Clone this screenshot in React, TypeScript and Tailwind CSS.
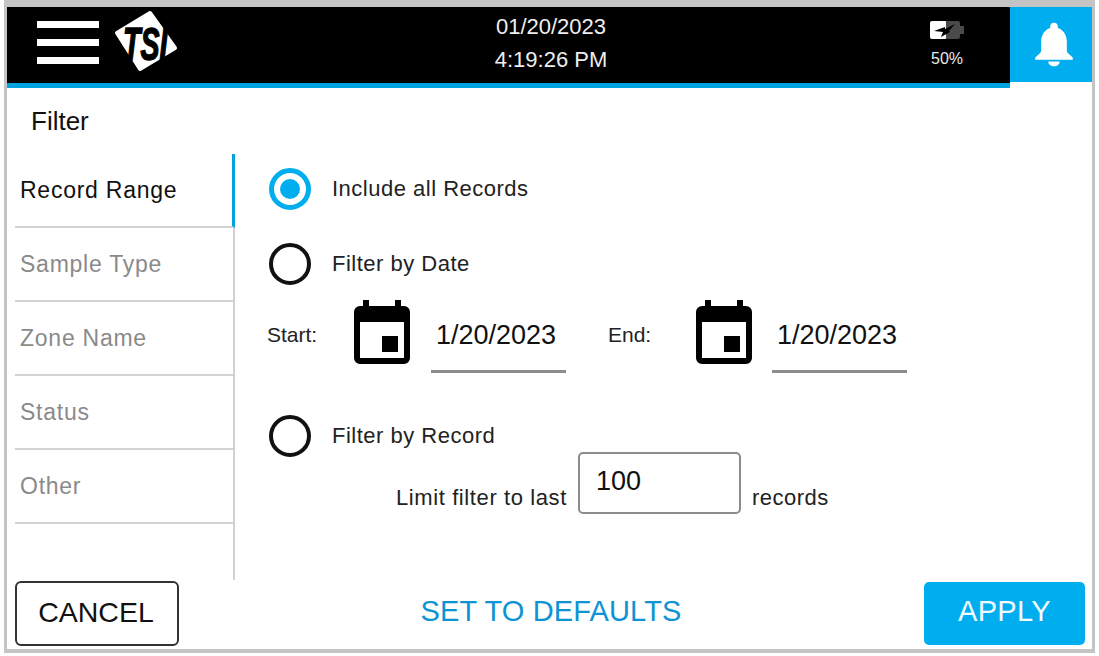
const font = "font-['Liberation_Sans',Arial,sans-serif]"

function Radio({ checked }: { checked?: boolean }) {
  return (
    <div
      className={
        checked
          ? "ml-[1px] flex h-[42px] w-[42px] shrink-0 items-center justify-center rounded-full border-[5px] border-[#00aeef]"
          : "ml-[1px] flex h-[42px] w-[42px] shrink-0 items-center justify-center rounded-full border-[4px] border-[#111111]"
      }
    >
      {checked && <div className="h-[20px] w-[20px] rounded-full bg-[#00aeef]" />}
    </div>
  )
}

function CalendarIcon() {
  return (
    <svg width="56" height="64" viewBox="0 0 56 64" className="shrink-0">
      <path
        fill="#000"
        fillRule="evenodd"
        d="M9 0h6v6h26V0h6v6h3a6 6 0 0 1 6 6v46a6 6 0 0 1-6 6H6a6 6 0 0 1-6-6V12a6 6 0 0 1 6-6h3V0zM6 22v36h44V22H6z"
      />
      <rect x="28" y="36" width="16" height="16" fill="#000" />
    </svg>
  )
}

function DateField({ value }: { value: string }) {
  return (
    <div className="flex h-[73px] w-[135px] items-center border-b-[3px] border-[#8c8c8c] pl-[5px] pt-[1px] text-[27px] tracking-normal text-[#111]">
      {value}
    </div>
  )
}

const tabs = ["Record Range", "Sample Type", "Zone Name", "Status", "Other"]

export default function App() {
  return (
    <div className={`${font} h-[656px] w-[1099px] overflow-hidden bg-white`}>
      <div className="ml-[4px] flex h-[653px] w-[1091px] flex-col border-x-[3px] border-t-[7px] border-b-[4px] border-[#c4c4c4] bg-white">
        {/* Header */}
        <header className="flex h-[81px] shrink-0">
          <div className="flex flex-1 items-start border-b-[5px] border-[#00a3dd] bg-black">
            <div className="ml-[30px] mt-[14px] flex w-[62px] flex-col gap-[11px]">
              <div className="h-[7px] bg-white" />
              <div className="h-[7px] bg-white" />
              <div className="h-[7px] bg-white" />
            </div>
            <svg width="66" height="64" viewBox="0 0 66 64" className="ml-[14px] mt-[3px] shrink-0">
              <path
                fill="#fff"
                stroke="#fff"
                strokeWidth="4"
                strokeLinejoin="round"
                d="M37 3 L62 38 L27 59 L4 23 Z"
              />
              <g transform="translate(10 50) scale(0.62 1)">
                <text
                  fontFamily="Liberation Sans"
                  fontWeight="700"
                  fontStyle="italic"
                  fontSize="46"
                  fill="#000"
                  stroke="#000"
                  strokeWidth="1.5"
                >
                  TSI
                </text>
              </g>
            </svg>
            <div className="ml-[297px] mt-[3px] flex w-[150px] flex-col items-center text-[22px] leading-[33px] text-[#eeeeee]">
              <span>01/20/2023</span>
              <span>4:19:26 PM</span>
            </div>
            <div className="ml-[304px] mt-[14px] flex w-[34px] flex-col items-center text-[#e8e8e8]">
              <svg width="36" height="18" viewBox="0 0 36 18" className="shrink-0">
                <rect x="1" y="0" width="17" height="18" rx="2" fill="#fff" />
                <path d="M17 0h12a2 2 0 0 1 2 2v3h4v8h-4v3a2 2 0 0 1-2 2H17z" fill="#4a4a4a" />
                <path d="M5 10 L16 6 L16 8 L26 3 L20 10 L21 11 L12 16 L14 11 Z" fill="#000" />
              </svg>
              <span className="mt-[11px] text-[16px] leading-[18px]">50%</span>
            </div>
          </div>
          <div className="flex h-[75px] w-[82px] items-center justify-center bg-[#00aeef] pl-[6px]">
            <svg width="38" height="45" viewBox="0 0 40 46">
              <path
                fill="#fff"
                d="M20 0a4 4 0 0 1 4 4v1.5C30 7.5 33.5 13 33.5 20v9c0 2.5 2 4 4.500 6 1.500 1.200 2 2 2 3 0 .8-.6 1-1.500 1H1.500C.6 39 0 38.800 0 38c0-1 .5-1.800 2-3 2.500-2 4.500-3.500 4.500-6v-9C6.500 13 10 7.500 16 5.500V4a4 4 0 0 1 4-4z"
              />
              <path fill="#fff" d="M14 41h12c0 3-2.500 5-6 5s-6-2-6-5z" />
            </svg>
          </div>
        </header>

        <div className="ml-[24px] mt-[15px] text-[26px] leading-[36px] text-[#111]">Filter</div>

        {/* Main */}
        <div className="mt-[15px] flex min-h-0 flex-1">
          <nav className="ml-[8px] h-[426px] w-[220px] shrink-0 border-r-[2px] border-[#d2d2d2]">
            {tabs.map((tab, i) => (
              <div
                key={tab}
                className={
                  i === 0
                    ? "-mr-[2px] flex h-[74px] items-center border-r-[3px] border-b-[2px] border-r-[#00a3dd] border-b-[#d2d2d2] pl-[5px] pt-[1px] text-[23px] tracking-[0.75px] text-[#111]"
                    : "flex h-[74px] items-center border-b-[2px] border-[#d2d2d2] pl-[5px] pt-[1px] text-[23px] tracking-[0.75px] text-[#8a8a8a]"
                }
              >
                {tab}
              </div>
            ))}
          </nav>

          <div className="ml-[33px] flex flex-col text-[22px] tracking-[0.5px] text-[#222]">
            <div className="mt-[13px] flex h-[43px] items-center gap-[21px]">
              <Radio checked />
              <span>Include all Records</span>
            </div>
            <div className="mt-[32px] flex h-[43px] items-center gap-[21px]">
              <Radio />
              <span>Filter by Date</span>
            </div>
            <div className="-ml-[1px] mt-[15px] flex items-start tracking-normal">
              <span className="mt-[19px] w-[87px] text-[21px]">Start:</span>
              <CalendarIcon />
              <div className="ml-[21px]">
                <DateField value="1/20/2023" />
              </div>
              <span className="ml-[42px] mt-[19px] w-[88px] text-[21px]">End:</span>
              <CalendarIcon />
              <div className="ml-[20px]">
                <DateField value="1/20/2023" />
              </div>
            </div>
            <div className="mt-[41px] flex h-[43px] items-center gap-[21px]">
              <Radio />
              <span>Filter by Record</span>
            </div>
            <div className="ml-[128px] -mt-[5px] flex items-end">
              <span className="tracking-[0.6px]">Limit filter to last</span>
              <div className="ml-[11px] flex h-[62px] w-[163px] items-start rounded-[5px] border-[2px] border-[#8c8c8c] pl-[16px] pt-[7px] text-[27px] tracking-normal text-[#111]">
                100
              </div>
              <span className="ml-[11px]">records</span>
            </div>
          </div>
        </div>

        {/* Footer */}
        <footer className="mb-[3px] flex h-[65px] shrink-0 items-center justify-between pl-[8px] pr-[7px]">
          <button className="h-[65px] w-[164px] rounded-[6px] border-[2px] border-[#333] pb-[3px] pr-[2px] text-[28.5px] text-[#111]">CANCEL</button>
          <button className="-ml-[1px] pb-[3px] text-[29px] tracking-[0.15px] text-[#0c94d4]">SET TO DEFAULTS</button>
          <button className="h-[63px] w-[161px] rounded-[5px] bg-[#00aeef] pb-[3px] text-[29px] tracking-[0.3px] text-[#f2fbff]">APPLY</button>
        </footer>
      </div>
    </div>
  )
}
